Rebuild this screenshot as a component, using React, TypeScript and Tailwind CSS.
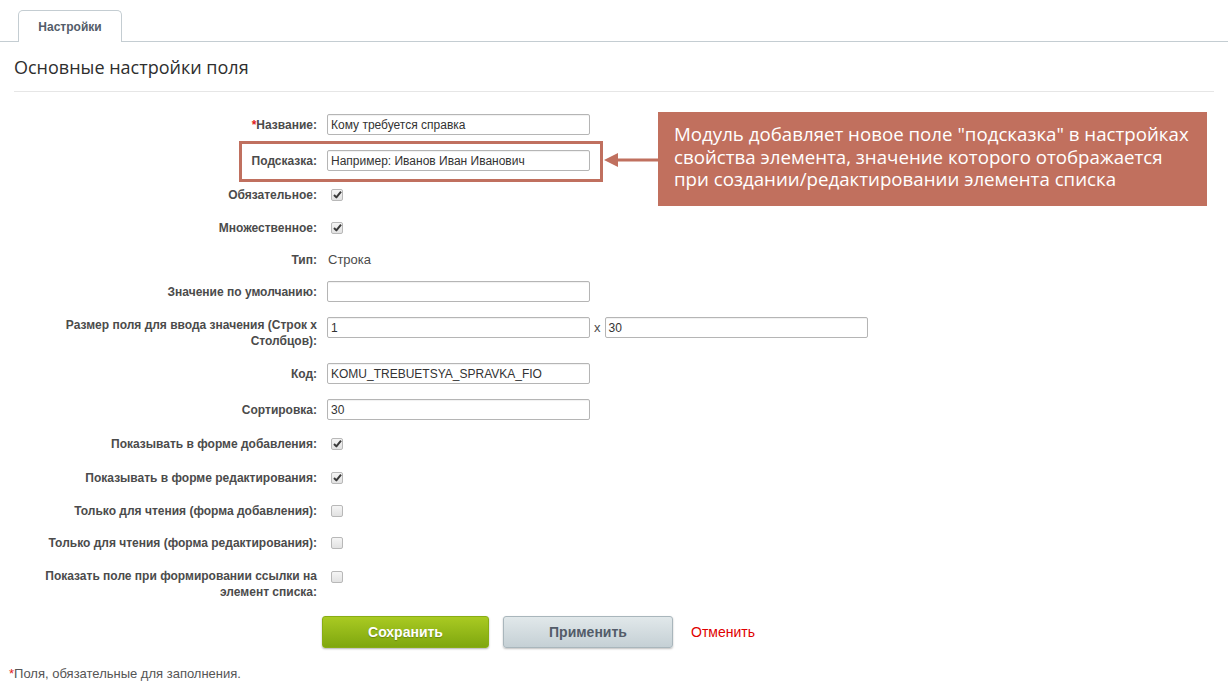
import React from "react";

type Row =
  | { kind: "input"; label: string; value: string; required?: boolean; mt: string }
  | { kind: "check"; label: string; checked: boolean; mt: string; tall?: boolean }
  | { kind: "text"; label: string; value: string; mt: string }
  | { kind: "size"; label: string; rows: string; cols: string; mt: string };

const rows: Row[] = [
  { kind: "input", label: "Название:", value: "Кому требуется справка", required: true, mt: "mt-0" },
  { kind: "input", label: "Подсказка:", value: "Например: Иванов Иван Иванович", mt: "mt-[15px]" },
  { kind: "check", label: "Обязательное:", checked: true, mt: "mt-[13px]" },
  { kind: "check", label: "Множественное:", checked: true, mt: "mt-[12px]" },
  { kind: "text", label: "Тип:", value: "Строка", mt: "mt-[11px]" },
  { kind: "input", label: "Значение по умолчанию:", value: "", mt: "mt-[11px]" },
  { kind: "size", label: "Размер поля для ввода значения (Строк x Столбцов):", rows: "1", cols: "30", mt: "mt-[15px]" },
  { kind: "input", label: "Код:", value: "KOMU_TREBUETSYA_SPRAVKA_FIO", mt: "mt-[14px]" },
  { kind: "input", label: "Сортировка:", value: "30", mt: "mt-[15px]" },
  { kind: "check", label: "Показывать в форме добавления:", checked: true, mt: "mt-[13px]" },
  { kind: "check", label: "Показывать в форме редактирования:", checked: true, mt: "mt-[13px]" },
  { kind: "check", label: "Только для чтения (форма добавления):", checked: false, mt: "mt-[12px]" },
  { kind: "check", label: "Только для чтения (форма редактирования):", checked: false, mt: "mt-[11px]" },
  { kind: "check", label: "Показать поле при формировании ссылки на элемент списка:", checked: false, mt: "mt-[15px]", tall: true },
];

function TextInput({ value }: { value: string }) {
  return (
    <div className="w-[263px] h-[21px] border border-[#b5b5b5] rounded-[2px] bg-white px-[3px] flex items-center text-[12px] text-[#333] shadow-[inset_0_1px_1px_rgba(0,0,0,0.06)]">
      {value}
    </div>
  );
}

function Checkbox({ checked }: { checked: boolean }) {
  return (
    <span className="ml-[4px] w-[12px] h-[12px] rounded-[2px] border border-[#b8b8b8] bg-gradient-to-b from-[#f5f5f5] to-[#e2e2e2] flex items-center justify-center">
      {checked && (
        <svg width="9" height="9" viewBox="0 0 9 9">
          <path d="M1 5 L3.4 7.4 L8 1.6" fill="none" stroke="#3a3a3a" strokeWidth="2" strokeLinejoin="round" />
        </svg>
      )}
    </span>
  );
}

function Label({ text, required }: { text: string; required?: boolean }) {
  return (
    <div className="w-[276px] shrink-0 text-right text-[12px] leading-[16px] font-bold text-[#4b4b4b]">
      {required && <span className="text-[#e02020]">*</span>}
      {text}
    </div>
  );
}

function FormRow({ row }: { row: Row }) {
  const multi = row.kind === "size" || (row.kind === "check" && row.tall);
  return (
    <div className={`${row.mt} flex ${multi ? "items-start" : "items-center h-[21px]"} gap-[10px]`}>
      <Label text={row.label} required={row.kind === "input" ? row.required : false} />
      {row.kind === "input" && <TextInput value={row.value} />}
      {row.kind === "check" && (
        <div className={`h-[21px] flex items-center ${row.tall ? "-mt-[2px]" : ""}`}>
          <Checkbox checked={row.checked} />
        </div>
      )}
      {row.kind === "text" && <span className="text-[13px] text-[#4b4b4b] pl-px">{row.value}</span>}
      {row.kind === "size" && (
        <div className="flex items-center gap-[3px] text-[13px] text-[#4b4b4b]">
          <TextInput value={row.rows} />
          <span className="px-[1px]">x</span>
          <TextInput value={row.cols} />
        </div>
      )}
    </div>
  );
}

export default function App() {
  return (
    <div className="relative w-[1228px] h-[690px] bg-white overflow-hidden" style={{ fontFamily: '"Liberation Sans", Arial, sans-serif' }}>
      {/* Tabs */}
      <div className="pt-[10px] pl-[9px] border-b border-[#c4cdd2] flex">
        <div className="ml-[9px] -mb-px w-[104px] h-[32px] border border-b-0 border-[#c4cdd2] rounded-t-[5px] bg-white flex items-center justify-center text-[12px] font-bold text-[#535c69]">
          Настройки
        </div>
      </div>

      {/* Heading */}
      <div className="mx-[14px] mt-[13px] pb-[12px] border-b border-[#e6e6e6]">
        <h2 className="text-[18px] leading-[24px] text-[#2e2e2e]" style={{ fontFamily: '"Open Sans", sans-serif' }}>
          Основные настройки поля
        </h2>
      </div>

      {/* Form */}
      <div className="pl-[41px] pt-[22px] flex flex-col">
        {rows.map((r, i) => (
          <FormRow key={i} row={r} />
        ))}

        <div className="mt-[16px] ml-[281px] flex items-center">
          <button className="w-[167px] h-[32px] rounded-[3px] bg-gradient-to-b from-[#a9ca22] to-[#7fa70e] border border-[#88ad14] text-white text-[14px] font-bold shadow-[0_1px_2px_rgba(0,0,0,0.3)] [text-shadow:0_1px_1px_rgba(0,0,0,0.25)]">
            Сохранить
          </button>
          <button className="ml-[14px] w-[170px] h-[32px] rounded-[3px] bg-gradient-to-b from-[#e1e8ea] to-[#c5d0d5] border border-[#a9b6bc] text-[#535c69] text-[14px] font-bold shadow-[0_1px_2px_rgba(0,0,0,0.25)]">
            Применить
          </button>
          <span className="ml-[18px] text-[14px] text-[#e00000]">Отменить</span>
        </div>
      </div>

      <div className="pl-[9px] mt-[16px] text-[13px] text-[#555]">
        <span className="text-[#e02020]">*</span>Поля, обязательные для заполнения.
      </div>

      {/* Annotation overlay */}
      <div className="absolute left-[239px] top-[141px] w-[364px] h-[41px] border-[3px] border-[#c0705f]" />
      <svg className="absolute left-[602px] top-[150px]" width="58" height="20" viewBox="0 0 58 20">
        <polygon points="2,10 16,3 16,17" fill="#c0705f" />
        <rect x="14" y="8.5" width="44" height="3" fill="#c0705f" />
      </svg>
      <div
        className="absolute left-[658px] top-[112px] w-[549px] h-[94px] bg-[#c1705e] text-white text-[18.7px] leading-[22.5px] pl-[16px] pt-[11px] whitespace-nowrap"
        style={{ fontFamily: '"Open Sans", sans-serif' }}
      >
        Модуль добавляет новое поле "подсказка" в настройках
        <br />
        свойства элемента, значение которого отображается
        <br />
        при создании/редактировании элемента списка
      </div>
    </div>
  );
}
